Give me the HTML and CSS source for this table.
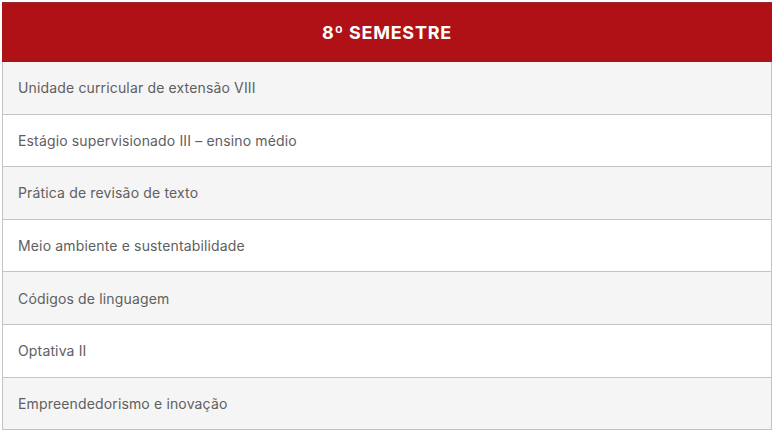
FILE: index.html
```html
<!DOCTYPE html>
<html lang="pt-BR">
<head>
<meta charset="utf-8">
<title>8º Semestre</title>
<link rel="stylesheet" href="styles.css">
</head>
<body>
<div class="page">
  <div class="table">
    <div class="head">8º SEMESTRE</div>
    <div class="row alt">Unidade curricular de extensão VIII</div>
    <div class="row">Estágio supervisionado III – ensino médio</div>
    <div class="row alt">Prática de revisão de texto</div>
    <div class="row">Meio ambiente e sustentabilidade</div>
    <div class="row alt">Códigos de linguagem</div>
    <div class="row">Optativa II</div>
    <div class="row alt">Empreendedorismo e inovação</div>
  </div>
</div>
</body>
</html>
```

FILE: styles.css
```css
html, body {
  margin: 0;
  padding: 0;
  background: #ffffff;
}
.page {
  padding: 2px 4px 0 2px;
  font-family: "Inter", "Noto Sans", sans-serif;
}
.table {
  display: flex;
  flex-direction: column;
  border-left: 1px solid #c4c4c4;
  border-right: 1px solid #c4c4c4;
}
.head {
  height: 60px;
  box-sizing: border-box;
  background: #b01116;
  border-top: 1px solid #9a2a2e;
  color: #ffffff;
  font-weight: 700;
  font-size: 18px;
  letter-spacing: 0.75px;
  display: flex;
  align-items: center;
  justify-content: center;
  margin: 0 -1px;
}
.row {
  height: 52.6px;
  box-sizing: border-box;
  border-bottom: 1px solid #c4c4c4;
  display: flex;
  align-items: center;
  padding-left: 15px;
  font-size: 14px;
  letter-spacing: 0.15px;
  color: #606060;
  background: #ffffff;
}
.row.alt {
  background: #f5f5f5;
}
```
